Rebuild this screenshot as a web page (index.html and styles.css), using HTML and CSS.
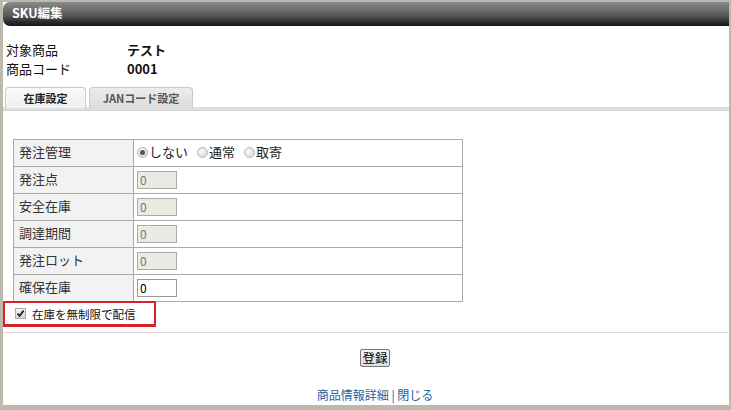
FILE: index.html
```
<!DOCTYPE html>
<html lang="ja">
<head>
    <meta charset="UTF-8">
    <title>SKU編集</title>
    <link rel="stylesheet" href="styles.css">
</head>
<body>
    <div class="window">
        <div class="title-bar">SKU編集</div>

        <div class="info">
            <div class="info-row"><span class="info-label">対象商品</span><span class="info-value">テスト</span></div>
            <div class="info-row"><span class="info-label">商品コード</span><span class="info-value">0001</span></div>
        </div>

        <div class="tabs">
            <div class="tab active">在庫設定</div>
            <div class="tab">JANコード設定</div>
        </div>

        <table class="stock-table">
            <tr>
                <th>発注管理</th>
                <td>
                    <span class="radio checked"></span><span class="radio-label">しない</span><span class="radio"></span><span class="radio-label">通常</span><span class="radio"></span><span class="radio-label">取寄</span>
                </td>
            </tr>
            <tr><th>発注点</th><td><span class="num-input disabled">0</span></td></tr>
            <tr><th>安全在庫</th><td><span class="num-input disabled">0</span></td></tr>
            <tr><th>調達期間</th><td><span class="num-input disabled">0</span></td></tr>
            <tr><th>発注ロット</th><td><span class="num-input disabled">0</span></td></tr>
            <tr><th>確保在庫</th><td><span class="num-input">0</span></td></tr>
        </table>

        <div class="unlimited">
            <span class="checkbox">
                <svg width="9" height="9" viewBox="0 0 9 9"><path d="M1.5 4.6 L3.6 6.8 L7.6 1.6" fill="none" stroke="#222" stroke-width="1.8"/></svg>
            </span>
            在庫を無制限で配信
        </div>

        <div class="actions">
            <button class="submit-btn">登録</button>
        </div>

        <div class="links">
            <a href="#">商品情報詳細</a>&nbsp;|&nbsp;<a href="#">閉じる</a>
        </div>
    </div>
</body>
</html>
```

FILE: styles.css
```
* {
    box-sizing: border-box;
    margin: 0;
    padding: 0;
}

body {
    background: #bdb9ad;
    font-family: "Noto Sans CJK JP", "Liberation Sans", sans-serif;
    font-size: 12px;
    color: #222;
    padding: 2px 2px 0 3px;
}

.window {
    background: #fff;
    height: 403px;
}

.title-bar {
    height: 24px;
    line-height: 22px;
    padding-left: 9px;
    color: #fff;
    font-weight: bold;
    font-size: 12.5px;
    border-radius: 7px 0 0 7px;
    background: linear-gradient(#8a8a8a, #5a5a5a 55%, #2a2a2a 85%, #151515);
}

.info {
    margin-top: 14px;
    padding-left: 3px;
    font-size: 13px;
    color: #111;
}

.info-row {
    height: 19px;
    line-height: 19px;
}

.info-label {
    display: inline-block;
    width: 121px;
}

.info-value {
    font-weight: bold;
}

.tabs {
    display: flex;
    gap: 3px;
    margin-top: 9px;
    padding-left: 2px;
    height: 23px;
    border-bottom: 3px solid #dedede;
    box-shadow: 0 1px 0 #d4d4d4;
}

.tab {
    height: 21px;
    line-height: 20px;
    width: 104px;
    text-align: center;
    white-space: nowrap;
    font-size: 11px;
    font-weight: bold;
    color: #555;
    border: 1px solid #c9c9c9;
    border-bottom: none;
    border-radius: 4px 4px 0 0;
    background: linear-gradient(#ececec, #dcdcdc);
}

.tab.active {
    width: 81px;
    color: #222;
    background: linear-gradient(#fafafa, #f0f0f0);
}

.stock-table {
    margin: 29px 0 0 10px;
    border-collapse: collapse;
    width: 450px;
}

.stock-table th,
.stock-table td {
    border: 1px solid #aaa;
    height: 27px;
    padding-bottom: 3px;
    text-align: left;
    font-weight: normal;
    font-size: 13px;
    vertical-align: middle;
}

.stock-table th {
    width: 120px;
    padding-left: 5px;
    background: #f2f2f2;
    color: #333;
}

.stock-table td {
    padding-left: 3px;
}

.radio {
    display: inline-block;
    width: 11px;
    height: 11px;
    border-radius: 50%;
    border: 1px solid #b8b8b8;
    background: radial-gradient(circle at 40% 35%, #fafafa, #d0d0d0);
    vertical-align: -1px;
    position: relative;
}

.radio.checked::after {
    content: "";
    position: absolute;
    left: 2px;
    top: 2px;
    width: 5px;
    height: 5px;
    border-radius: 50%;
    background: #555;
}

.radio-label {
    margin: 0 9px 0 1px;
}

.num-input {
    display: inline-block;
    width: 40px;
    height: 18px;
    line-height: 16px;
    border: 1px solid #999;
    padding-left: 2px;
    font-size: 12px;
    color: #000;
    background: #fff;
    vertical-align: middle;
}

.num-input.disabled {
    background: #ebebe4;
    border-color: #aaa;
    color: #777;
}

.unlimited {
    width: 153px;
    height: 26px;
    margin-top: -1px;
    border: 2px solid #d8222b;
    border-bottom-width: 3px;
    display: flex;
    align-items: center;
    gap: 6px;
    padding-left: 10px;
    font-size: 11.5px;
    color: #111;
}

.checkbox {
    display: inline-flex;
    align-items: center;
    justify-content: center;
    width: 11px;
    height: 11px;
    border: 1px solid #aaa;
    background: linear-gradient(#f4f4f4, #d4d4d4);
}

.actions {
    margin-top: 5px;
    border-top: 1px solid #dcdcdc;
    padding: 16px 0 0 18px;
    text-align: center;
}

.submit-btn {
    font-family: "Noto Sans CJK JP", sans-serif;
    font-size: 12.5px;
    height: 18px;
    line-height: 14px;
    padding: 0 1px;
    border: 1px solid #777;
    border-radius: 2px;
    background: linear-gradient(#f6f6f6, #dcdcdc);
    color: #000;
}

.links {
    margin-top: 19px;
    padding-left: 18px;
    text-align: center;
    font-size: 12px;
    color: #1f5fa0;
}

.links a {
    color: #1f5fa0;
    text-decoration: none;
}
```
